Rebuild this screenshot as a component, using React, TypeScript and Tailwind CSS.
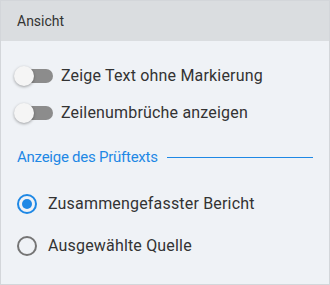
export default function App() {
  const toggles = ["Zeige Text ohne Markierung", "Zeilenumbrüche anzeigen"];
  const radios = [
    { label: "Zusammengefasster Bericht", checked: true },
    { label: "Ausgewählte Quelle", checked: false },
  ];

  return (
    <div className="w-[330px] h-[285px] bg-[#eff2f6] border border-[#d3d6da] font-['Roboto',sans-serif] flex flex-col">
      <div className="h-[40px] bg-[#dadde0] flex items-center px-4 text-[14px] text-[#333]">
        Ansicht
      </div>
      <div className="flex flex-col px-[13px] pt-[16px]">
        {toggles.map((t) => (
          <div key={t} className="flex items-center h-[37px]">
            <div className="relative w-[40px] h-[20px] shrink-0 flex items-center">
              <div className="absolute left-[8px] w-[31px] h-[14px] rounded-full bg-[#8c8c8c]" />
              <div className="absolute left-0 w-[20px] h-[20px] rounded-full bg-[#f5f5f5] shadow-[0_1px_3px_rgba(0,0,0,0.35)]" />
            </div>
            <span className="ml-[7px] text-[16px] tracking-[0.18px] text-[#333] whitespace-nowrap">{t}</span>
          </div>
        ))}
      </div>
      <div className="flex items-center px-4 mt-[14px] h-[24px]">
        <span className="text-[15px] tracking-[-0.25px] text-[#1e88e5] whitespace-nowrap">Anzeige des Prüftexts</span>
        <div className="ml-[9px] flex-1 h-px bg-[#1e88e5]" />
      </div>
      <div className="flex flex-col px-[16px] mt-[14px]">
        {radios.map((r) => (
          <div key={r.label} className="flex items-center h-[42px]">
            <div
              className={
                r.checked
                  ? "w-[20px] h-[20px] shrink-0 rounded-full border-2 border-[#1e88e5] flex items-center justify-center"
                  : "w-[20px] h-[20px] shrink-0 rounded-full border-2 border-[#757575]"
              }
            >
              {r.checked && <div className="w-[10px] h-[10px] rounded-full bg-[#1e88e5]" />}
            </div>
            <span className="ml-[11px] text-[16px] tracking-[0.18px] text-[#333] whitespace-nowrap">{r.label}</span>
          </div>
        ))}
      </div>
    </div>
  );
}
